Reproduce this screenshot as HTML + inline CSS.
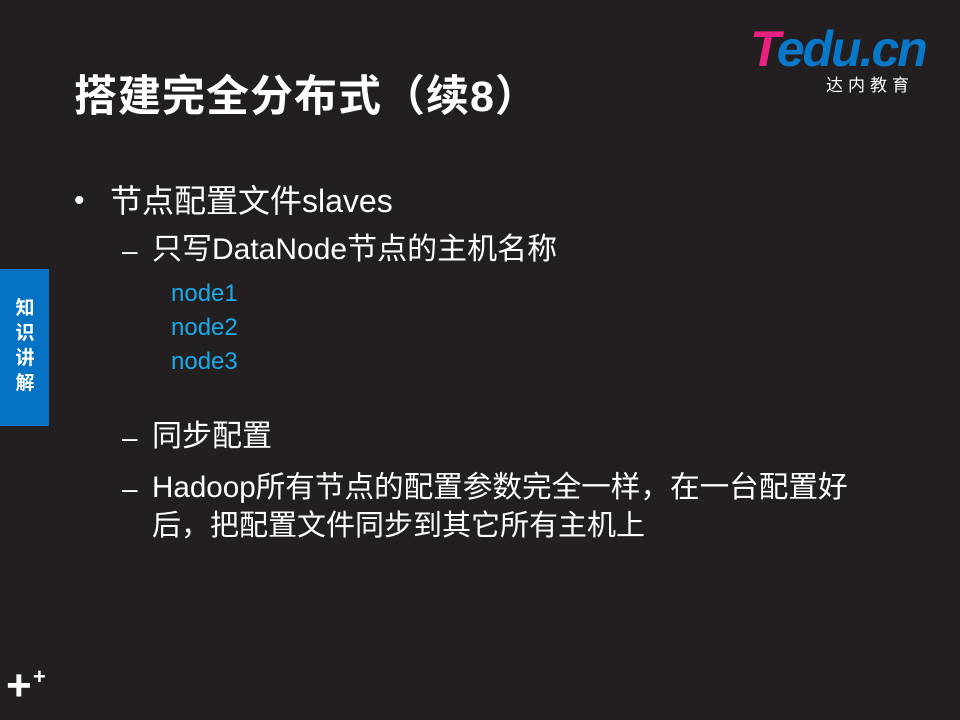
<!DOCTYPE html>
<html><head><meta charset="utf-8"><style>
body{margin:0;width:960px;height:720px;background:#231f20;position:relative;overflow:hidden;font-family:"Liberation Sans","Noto Sans CJK SC",sans-serif;color:#fff}
.a{position:absolute;white-space:nowrap}
.d{position:absolute;left:122px;font-size:28px;line-height:38px}
</style></head><body>
<div class="a" style="left:74px;top:70px;font-size:43px;font-weight:bold;line-height:54px;letter-spacing:1px">搭建完全分布式（续8）</div>
<div class="a" style="left:750px;top:24px;font-size:50px;font-weight:bold;font-style:italic;line-height:50px;letter-spacing:-2px"><span style="color:#e8207f">T</span><span style="color:#0a78c8">edu.cn</span></div>
<div class="a" style="left:826px;top:75px;font-size:17px;letter-spacing:5px;line-height:22px">达内教育</div>
<div class="a" style="left:0;top:269px;width:49px;height:157px;background:#0672c4"></div>
<div class="a" style="left:13px;top:296px;width:24px;font-size:19px;font-weight:bold;line-height:25px;white-space:normal;text-align:center">知识讲解</div>
<div class="a" style="left:74px;top:180px;font-size:30px;line-height:42px">•</div>
<div class="a" style="left:110px;top:180px;font-size:32px;line-height:42px">节点配置文件slaves</div>
<div class="d" style="top:232px">–</div>
<div class="a" style="left:152px;top:231px;font-size:30px;line-height:38px">只写DataNode节点的主机名称</div>
<div class="a" style="left:171px;top:277px;font-size:24px;line-height:34px;color:#1ba9e8">node1<br>node2<br>node3</div>
<div class="d" style="top:419px">–</div>
<div class="a" style="left:152px;top:418px;font-size:30px;line-height:38px">同步配置</div>
<div class="d" style="top:470px">–</div>
<div class="a" style="left:152px;top:469px;font-size:29.6px;line-height:38px">Hadoop所有节点的配置参数完全一样，在一台配置好</div>
<div class="a" style="left:152px;top:507px;font-size:29px;line-height:38px">后，把配置文件同步到其它所有主机上</div>
<div class="a" style="left:6px;top:664px;font-size:44px;font-weight:bold;line-height:44px">+</div>
<div class="a" style="left:33px;top:666px;font-size:22px;font-weight:bold;line-height:22px">+</div>
</body></html>
